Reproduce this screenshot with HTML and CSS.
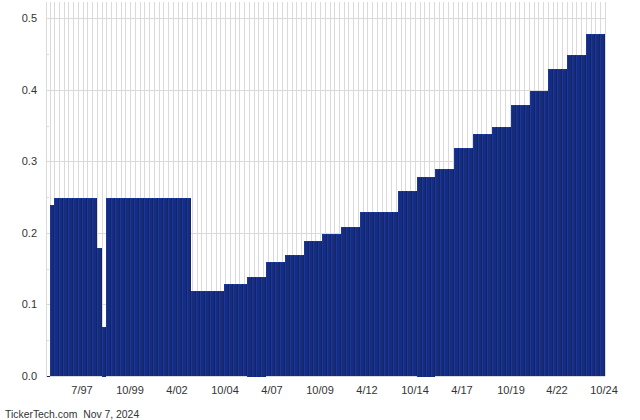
FILE: index.html
```html
<!DOCTYPE html>
<html lang="en">
<head>
<meta charset="utf-8">
<title>Dividend history chart</title>
<link rel="stylesheet" href="styles.css">
</head>
<body>
<svg class="chart" id="chart" width="640" height="420" viewBox="0 0 640 420" xmlns="http://www.w3.org/2000/svg">
  <g id="grid"></g>
  <g id="bars"></g>
  <g class="label-y">
    <text x="37" y="22">0.5</text>
    <text x="37" y="94">0.4</text>
    <text x="37" y="165">0.3</text>
    <text x="37" y="237">0.2</text>
    <text x="37" y="308">0.1</text>
    <text x="37" y="380">0.0</text>
  </g>
  <g class="label-x">
    <text x="82" y="394">7/97</text>
    <text x="130" y="394">10/99</text>
    <text x="177" y="394">4/02</text>
    <text x="225" y="394">10/04</text>
    <text x="272" y="394">4/07</text>
    <text x="320" y="394">10/09</text>
    <text x="367" y="394">4/12</text>
    <text x="415" y="394">10/14</text>
    <text x="462" y="394">4/17</text>
    <text x="511" y="394">10/19</text>
    <text x="557" y="394">4/22</text>
    <text x="604" y="394">10/24</text>
  </g>
  <text class="credit" x="5" y="418">TickerTech.com&#160;&#160;Nov 7, 2024</text>
</svg>
<script src="chart.js"></script>
</body>
</html>
```

FILE: styles.css
```css
html, body {
  margin: 0;
  padding: 0;
  background: #ffffff;
}
.chart {
  display: block;
  font-family: "Liberation Sans", Arial, sans-serif;
  font-size: 11px;
  fill: #333333;
}
.label-y text {
  text-anchor: end;
}
.label-x text {
  text-anchor: middle;
}
.credit {
  font-size: 10.4px;
}
.grid-line {
  fill: #dadada;
}
.bar-base {
  fill: #162c7e;
}
.bar-dark {
  fill: #14255f;
}
.bar-bright {
  fill: #1837a2;
}
```

FILE: chart.js
```js
var NS = "http://www.w3.org/2000/svg";
var grid = document.getElementById("grid");
var bars = document.getElementById("bars");
var BASE = 376, STEP = 4.746;

function rect(parent, cls, x, y, w, h) {
  var r = document.createElementNS(NS, "rect");
  r.setAttribute("class", cls);
  r.setAttribute("x", x);
  r.setAttribute("y", y);
  r.setAttribute("width", w);
  r.setAttribute("height", h);
  parent.appendChild(r);
}

/* Vertical grid: one line per quarter */
rect(grid, "grid-line", 46, 2, 1, 374);
for (var i = 1; i <= 118; i++) {
  rect(grid, "grid-line", Math.floor(50 + STEP * (i - 1)), 2, 1, 374);
}
/* Horizontal grid and half-way ticks */
[18, 90, 161, 233, 304, 376].forEach(function (y) {
  rect(grid, "grid-line", 46, y, 559, 1);
});
[54, 126, 197, 269, 340].forEach(function (y) {
  rect(grid, "grid-line", 46, y, 3, 1);
});

/* Each run of equal dividends: start x, end x, top y, pixels below the axis */
var runs = [
  [50, 54, 205, 0], [54, 97, 198, 0], [97, 102, 248, 0], [102, 106, 327, 1],
  [106, 191, 198, 0], [191, 224, 291, 0], [224, 247, 284, 0], [247, 266, 277, 1],
  [266, 285, 262, 0], [285, 304, 255, 0], [304, 322, 241, 0], [322, 341, 234, 0],
  [341, 360, 227, 0], [360, 398, 212, 0], [398, 417, 191, 0], [417, 435, 177, 1],
  [435, 454, 169, 0], [454, 473, 148, 0], [473, 492, 134, 0], [492, 511, 127, 0],
  [511, 530, 105, 0], [530, 548, 91, 0], [548, 567, 69, 0], [567, 586, 55, 0],
  [586, 605, 34, 0]
];

rect(bars, "bar-dark", 47, 376, 3, 1);
runs.forEach(function (run) {
  var start = run[0], end = run[1], top = run[2];
  var h = BASE - top + run[3];
  rect(bars, "bar-base", start, top, end - start, h);
  rect(bars, "bar-bright", start, top, end - start, 1);
  for (var x = start; x < end - 1; x += STEP) {
    var a = Math.round(x);
    var b = Math.min(Math.round(x + STEP), end);
    rect(bars, "bar-bright", a, top, 1, h);
    if (b - 1 > a) rect(bars, "bar-dark", b - 1, top, 1, h);
  }
});
```
